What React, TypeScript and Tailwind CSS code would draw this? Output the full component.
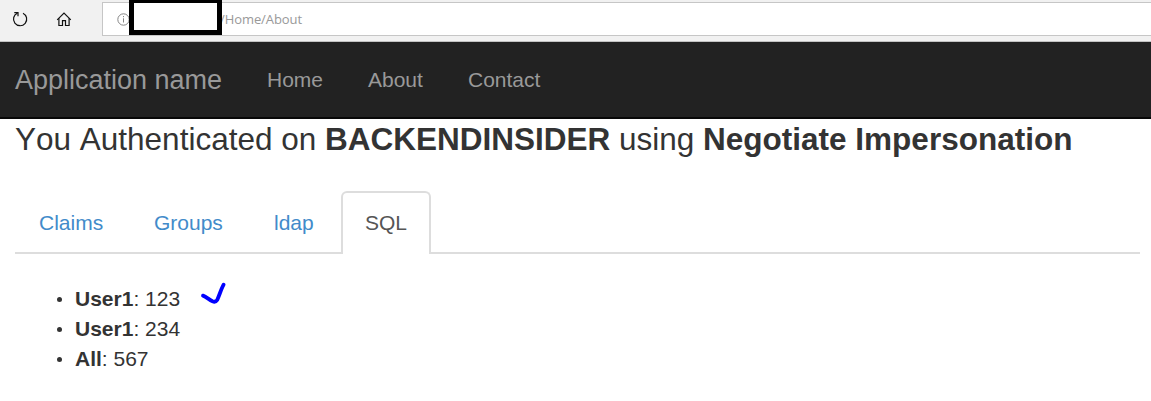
import React from "react";

const navLinks = [
  { label: "Home", width: "w-[101px]" },
  { label: "About", width: "w-[100px]" },
  { label: "Contact", width: "w-[118px]" },
];

const tabs = [
  { label: "Claims", width: "w-[115px]" },
  { label: "Groups", width: "w-[120px]" },
  { label: "ldap", width: "w-[91px]" },
];

const rows = [
  { name: "User1", value: "123", checked: true },
  { name: "User1", value: "234", checked: false },
  { name: "All", value: "567", checked: false },
];

function BrowserBar() {
  return (
    <div className="flex h-[42px] border-b border-[#c3c3c3] bg-[#f1f1f1]">
      <div className="flex w-[102px] shrink-0 pt-[11px] pl-[12px]">
        <svg width="16" height="16" viewBox="0 0 16 16" fill="none" stroke="#111" strokeWidth="1.2">
          <path d="M11 2.2A6.6 6.6 0 1 1 5.4 2.1" />
          <path d="M2.3 1.6H6V5.3" />
        </svg>
        <svg className="ml-[28px]" width="16" height="16" viewBox="0 0 16 16" fill="none" stroke="#111" strokeWidth="1.2">
          <path d="M1.2 8.8 8 2l6.8 6.8" />
          <path d="M2.9 7.2v7.3h3.6V9.6h3v4.9h3.6V7.2" />
        </svg>
      </div>
      <div className="relative mt-[2px] flex h-[34px] flex-1 items-center border-y border-l border-[#c6c6c6] bg-white font-['Open_Sans','Noto_Sans',sans-serif] text-[13px] text-[#999]">
        <svg className="ml-[14px]" width="13" height="13" viewBox="0 0 13 13" fill="none" stroke="#858585">
          <circle cx="6.5" cy="6.5" r="5.7" />
          <path d="M6.5 5.3v4.2M6.5 3v1.2" />
        </svg>
        <span className="ml-[90px] tracking-[-0.08px]">/Home/About</span>
        <div className="absolute -top-[3px] left-[26px] h-[35px] w-[93px] border-x-[5px] border-t-[3px] border-b-[5px] border-black bg-white" />
      </div>
    </div>
  );
}

export default function App() {
  return (
    <div className="h-[401px] overflow-hidden bg-white font-['Liberation_Sans',Arial,sans-serif] text-[21px] leading-[30px] text-[#333]">
      <BrowserBar />
      <nav className="flex h-[77px] items-center border-b-2 border-[#080808] bg-[#222] pl-[15px] text-[#999]">
        <a className="w-[252px] text-[27px]">Application name</a>
        {navLinks.map((link) => (
          <a key={link.label} className={link.width}>{link.label}</a>
        ))}
      </nav>
      <main className="pr-[11px] pl-[15px]">
        <h3 className="h-[72px] pt-[2px] text-[31.5px] leading-[36px] whitespace-nowrap [font-kerning:none]">
          You Authenticated on <strong>BACKENDINSIDER</strong> using <strong>Negotiate Impersonation</strong>
        </h3>
        <div className="flex h-[63px] border-b-2 border-[#ddd] pl-[24px]">
          {tabs.map((tab) => (
            <a key={tab.label} className={`${tab.width} pt-[17px] text-[#428bca]`}>{tab.label}</a>
          ))}
          <div className="-ml-[24px] h-[63px] w-[90px] shrink-0 rounded-t-[6px] border-2 border-b-0 border-[#ddd] bg-white pt-[15px] pl-[22px] text-[#555]">SQL</div>
        </div>
        <ul className="mt-[30px] pl-[41px]">
          {rows.map((row, index) => (
            <li key={index} className="flex h-[30px] items-center">
              <span className="mr-[13px] ml-px size-[5px] rounded-full bg-[#333]" />
              <span className="w-[124px]"><strong>{row.name}</strong>: {row.value}</span>
              {row.checked && (
                <svg className="-mt-[10px]" width="28" height="24" viewBox="0 0 28 24" fill="none" stroke="#0000ff" strokeWidth="3.8" strokeLinecap="round" strokeLinejoin="round">
                  <path d="M4 13.6C7.5 14.8 10 17.7 13.5 19.3Q16.5 20.5 18.2 18C20.3 13.5 22 7.5 24.6 2.7" />
                </svg>
              )}
            </li>
          ))}
        </ul>
      </main>
    </div>
  );
}
